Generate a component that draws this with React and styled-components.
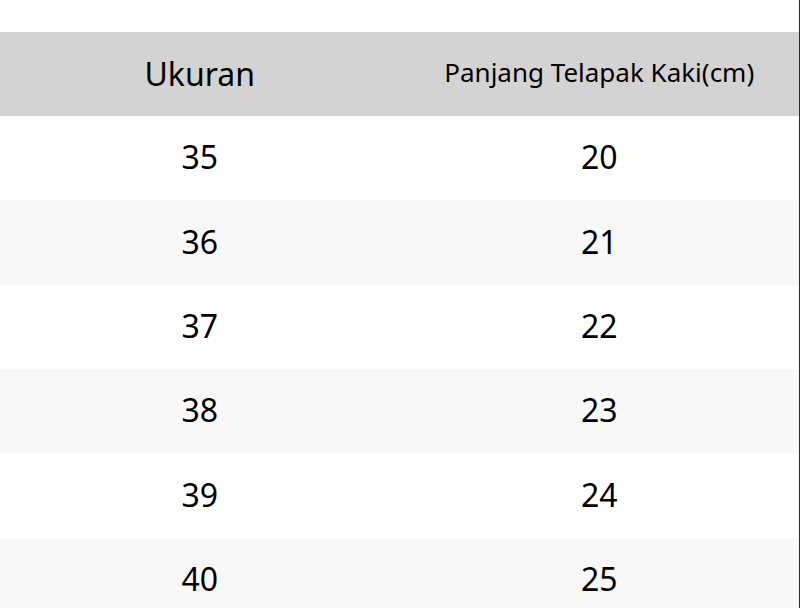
import React from 'react';
import styled, {createGlobalStyle} from "styled-components";

const GlobalStyle = createGlobalStyle`
  html, body {
    margin: 0;
    padding: 0;
    background: #ffffff;
  }
  body {
    font-family: "Noto Sans", "Open Sans", sans-serif;
    color: #000000;
  }
`

const Page = styled.div`
  width: 800px;
  height: 608px;
  overflow: hidden;
  box-sizing: border-box;
  padding-top: 32px;
  border-right: 1px solid #2a2a2a;
`

const Table = styled.div`
  display: grid;
  grid-template-columns: 1fr 1fr;
`

const HeadCell = styled.div`
  height: 84px;
  background: #d3d3d3;
  display: flex;
  align-items: center;
  justify-content: center;
  font-size: ${p => p.small ? '26px' : '32px'};
  padding-bottom: ${p => p.small ? '4px' : '1px'};
  box-sizing: border-box;
`

const Cell = styled.div`
  height: 84.4px;
  background: ${p => p.alt ? '#f8f8f8' : '#ffffff'};
  display: flex;
  align-items: center;
  justify-content: center;
  font-size: 32px;
  padding-bottom: 3px;
  box-sizing: border-box;
`

const sizes = [
    [35, 20],
    [36, 21],
    [37, 22],
    [38, 23],
    [39, 24],
    [40, 25],
];

const App = () => (
    <>
        <GlobalStyle/>
        <Page>
            <Table>
                <HeadCell>Ukuran</HeadCell>
                <HeadCell small>Panjang Telapak Kaki(cm)</HeadCell>
                {sizes.map(([size, len], i) => (
                    <React.Fragment key={size}>
                        <Cell alt={i % 2 === 1}>{size}</Cell>
                        <Cell alt={i % 2 === 1}>{len}</Cell>
                    </React.Fragment>
                ))}
            </Table>
        </Page>
    </>
);

export default App;
